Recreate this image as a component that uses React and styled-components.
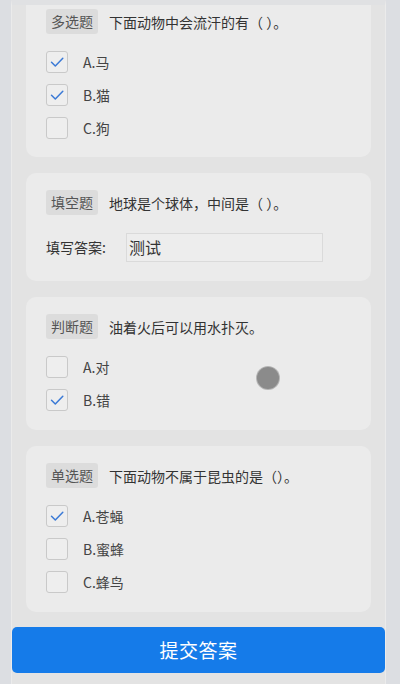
import React from "react";
import styled, { createGlobalStyle } from "styled-components";

const Global = createGlobalStyle`
  html, body { margin: 0; padding: 0; background: #dcdee2; }
  body { font-family: "Noto Sans CJK SC", "Noto Sans", sans-serif; }
  * { box-sizing: border-box; }
`;

const Page = styled.div`
  width: 400px;
  height: 684px;
  overflow: hidden;
  padding-left: 11px;
  background: #dcdee2;
  position: relative;
`;

const Container = styled.div`
  width: 375px;
  height: 684px;
  background: #e3e3e3;
  border-left: 1px solid #ebebeb;
  border-right: 1px solid #ebebeb;
  border-top: 5px solid #e0e1e3;
  display: flex;
  flex-direction: column;
`;

const List = styled.div`
  display: flex;
  flex-direction: column;
  gap: 16px;
  padding: 0 14px;
`;

const Card = styled.div`
  background: #ebebeb;
  border-radius: ${(p) => (p.$clipped ? "0 0 10px 10px" : "10px")};
  padding: ${(p) => (p.$clipped ? "4px 20px 18px" : "17px 20px 19px")};
  display: flex;
  flex-direction: column;
  gap: 17px;
`;

const Head = styled.div`
  display: flex;
  align-items: center;
  gap: 11px;
  height: 25px;
`;

const Tag = styled.span`
  height: 25px;
  line-height: 25px;
  padding: 0 5px;
  background: #dcdcdc;
  border-radius: 3px;
  color: #555;
  font-size: 14px;
`;

const Question = styled.span`
  color: #333;
  font-size: 14px;
  line-height: 20px;
`;

const Options = styled.div`
  display: flex;
  flex-direction: column;
  gap: 11px;
`;

const Option = styled.div`
  display: flex;
  align-items: center;
  gap: 15px;
  height: 22px;
`;

const Box = styled.span`
  width: 22px;
  height: 22px;
  border: 1px solid #c9c9c9;
  border-radius: 3px;
  background: #eeeeee;
  display: flex;
  align-items: center;
  justify-content: center;
`;

const Label = styled.span`
  color: #444;
  font-size: 14px;
  line-height: 20px;
`;

const FillRow = styled.div`
  display: flex;
  align-items: center;
  height: 30px;
`;

const FillLabel = styled.span`
  width: 80px;
  color: #333;
  font-size: 14px;
  line-height: 20px;
`;

const Input = styled.div`
  width: 197px;
  height: 29px;
  border: 1px solid #dadada;
  background: #ededed;
  color: #333;
  font-size: 16px;
  line-height: 27px;
  padding-left: 2px;
`;

const Submit = styled.button`
  margin-top: 15px;
  height: 46px;
  width: 100%;
  border: none;
  border-radius: 5px;
  background: #157be9;
  color: #fff;
  font-family: "Noto Sans CJK SC", sans-serif;
  font-size: 19px;
  line-height: 46px;
  padding: 0;
  letter-spacing: 0.5px;
`;

const Touch = styled.div`
  position: absolute;
  left: 257px;
  top: 367px;
  width: 22px;
  height: 22px;
  border-radius: 50%;
  background: #8b8b8b;
  box-shadow: 0 0 0 1px #b5b5b5;
`;

const Check = () => (
  <svg width="16" height="16" viewBox="0 0 16 16">
    <path d="M2.5 8.2 L6.3 12 L13.8 4.2" fill="none" stroke="#3b7ad6" strokeWidth="1.5" strokeLinecap="round" strokeLinejoin="round" />
  </svg>
);

const Opt = ({ text, checked }) => (
  <Option>
    <Box>{checked && <Check />}</Box>
    <Label>{text}</Label>
  </Option>
);

export default function App() {
  return (
    <>
      <Global />
      <Page>
        <Container>
          <List>
            <Card $clipped>
              <Head>
                <Tag>多选题</Tag>
                <Question>下面动物中会流汗的有（ ）。</Question>
              </Head>
              <Options>
                <Opt text="A.马" checked />
                <Opt text="B.猫" checked />
                <Opt text="C.狗" />
              </Options>
            </Card>
            <Card>
              <Head>
                <Tag>填空题</Tag>
                <Question>地球是个球体，中间是（ ）。</Question>
              </Head>
              <FillRow>
                <FillLabel>填写答案:</FillLabel>
                <Input>测试</Input>
              </FillRow>
            </Card>
            <Card>
              <Head>
                <Tag>判断题</Tag>
                <Question>油着火后可以用水扑灭。</Question>
              </Head>
              <Options>
                <Opt text="A.对" />
                <Opt text="B.错" checked />
              </Options>
            </Card>
            <Card>
              <Head>
                <Tag>单选题</Tag>
                <Question>下面动物不属于昆虫的是（）。</Question>
              </Head>
              <Options>
                <Opt text="A.苍蝇" checked />
                <Opt text="B.蜜蜂" />
                <Opt text="C.蜂鸟" />
              </Options>
            </Card>
          </List>
          <Submit>提交答案</Submit>
        </Container>
        <Touch />
      </Page>
    </>
  );
}
